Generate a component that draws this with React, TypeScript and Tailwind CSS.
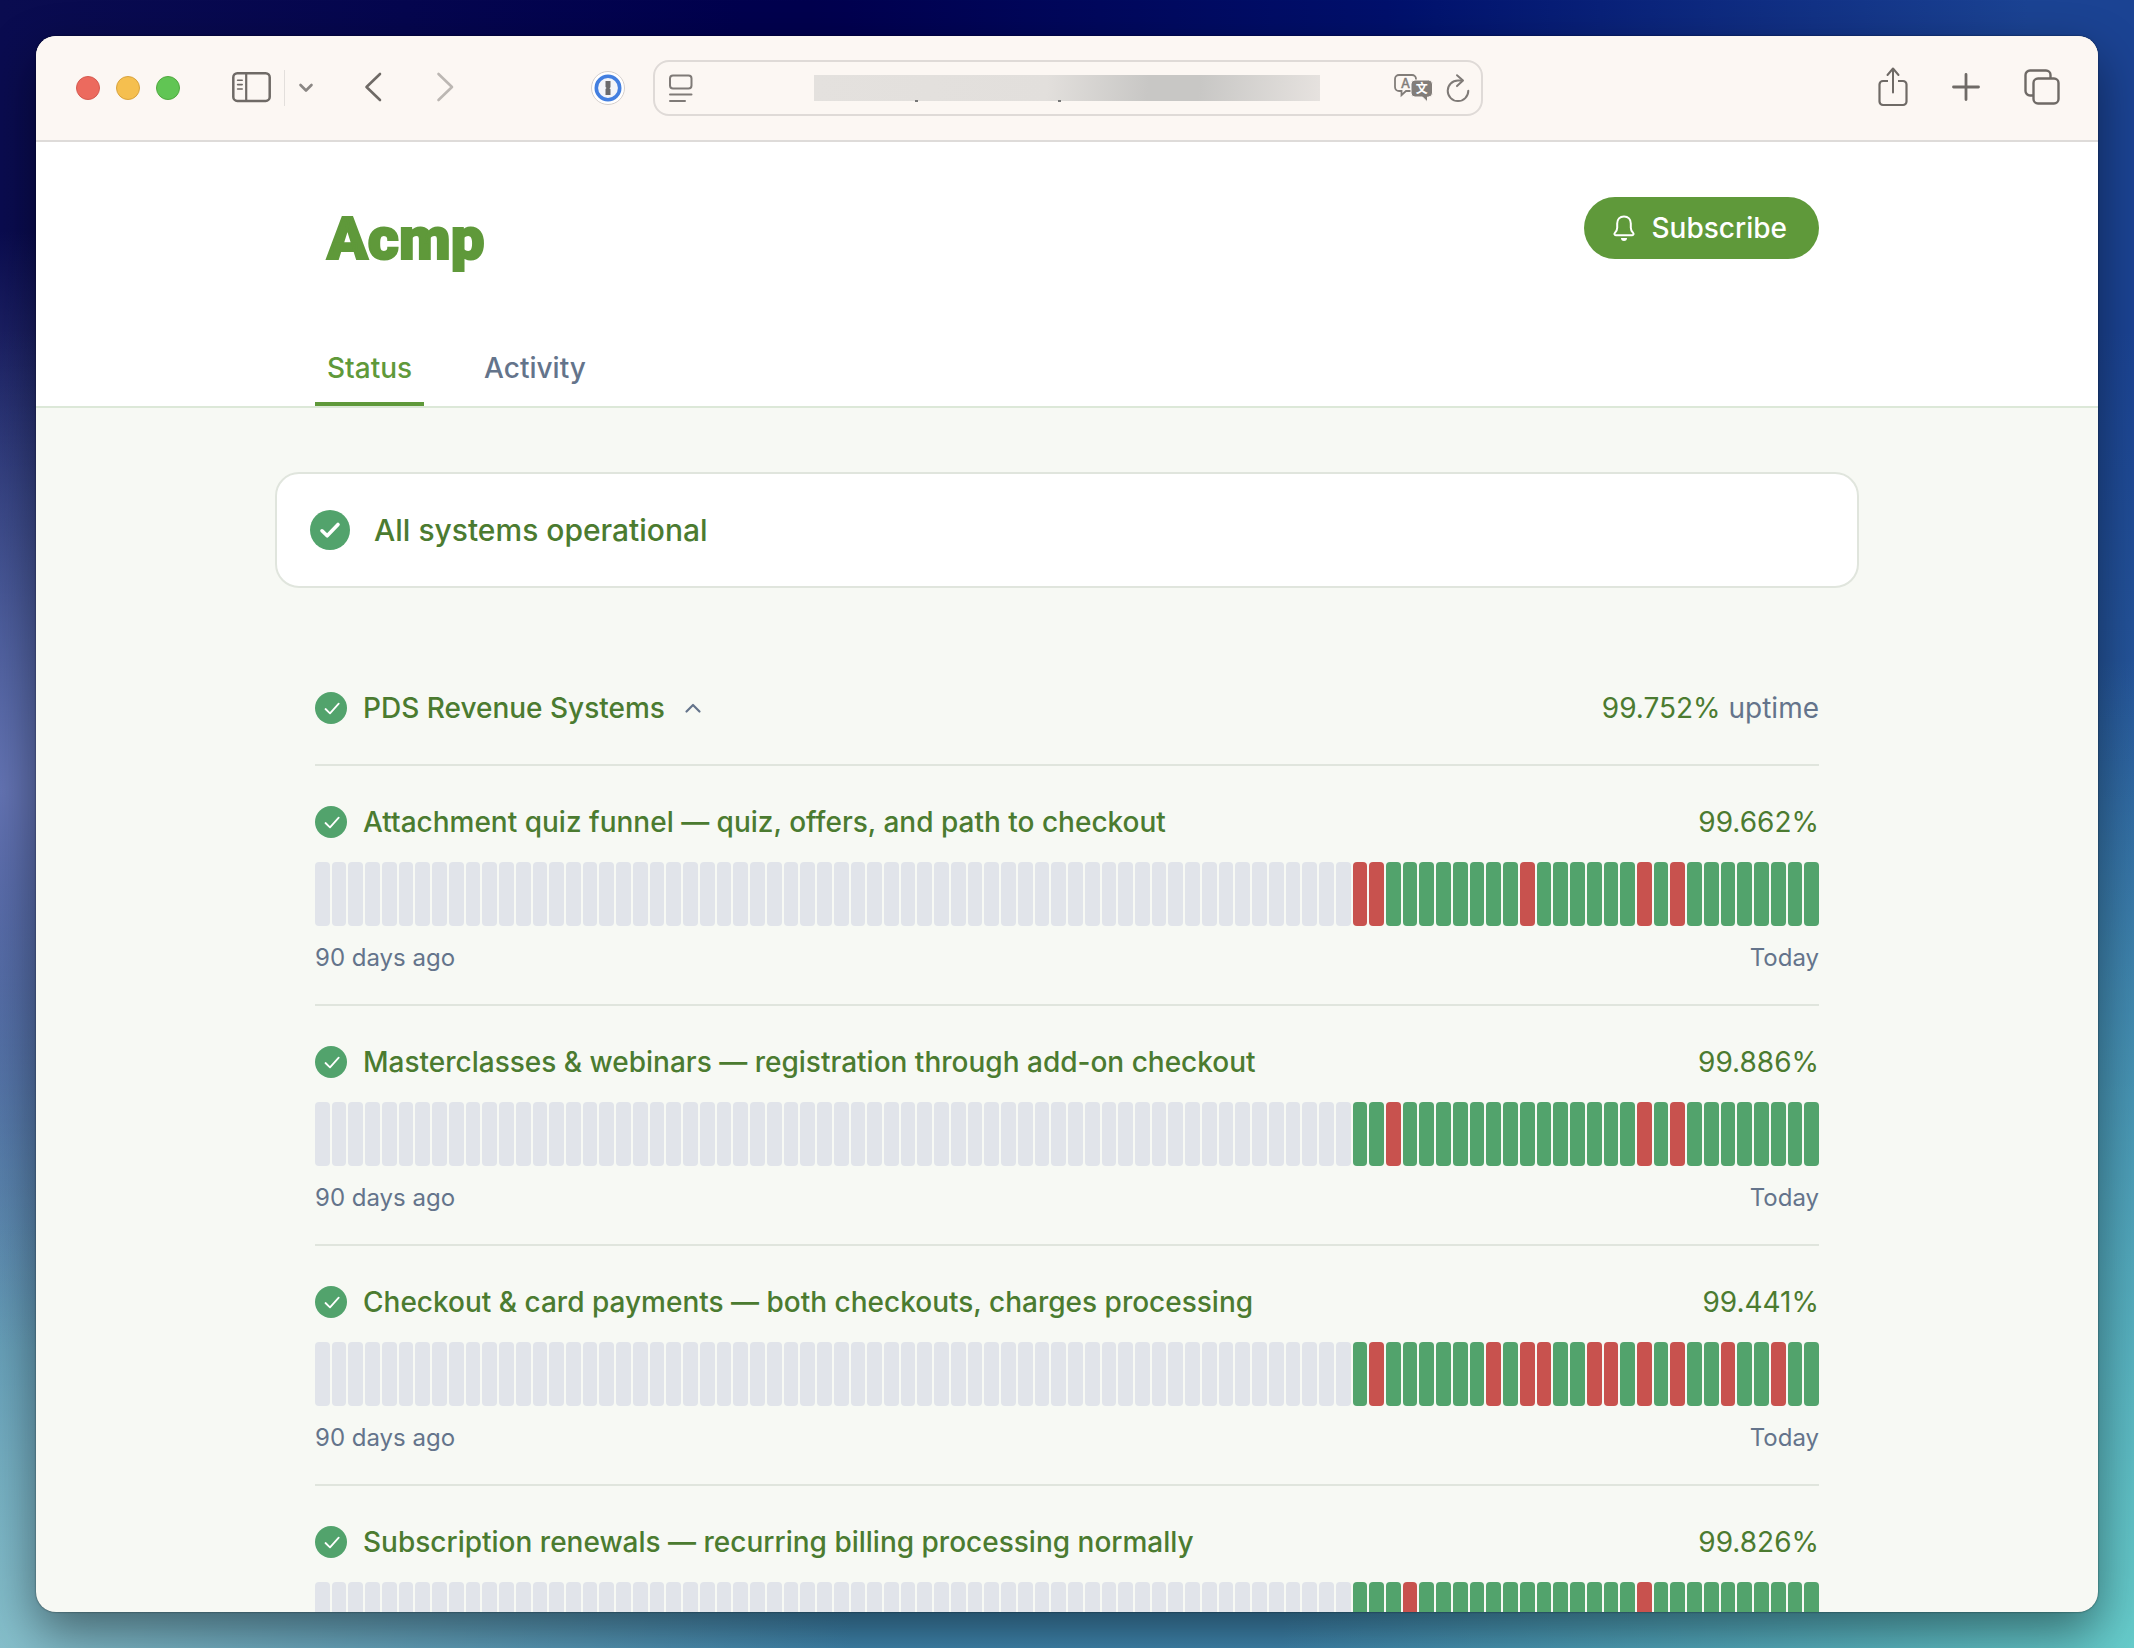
import type { ReactNode } from "react";

interface Service {
  name: string;
  uptime: string;
  outages: number[];
}

const TOTAL_DAYS = 90;
const TRACKED_DAYS = 28;

// outages are counted from the first tracked day
const services: Service[] = [
  {
    name: "Attachment quiz funnel — quiz, offers, and path to checkout",
    uptime: "99.662%",
    outages: [0, 1, 10, 17, 19],
  },
  {
    name: "Masterclasses & webinars — registration through add-on checkout",
    uptime: "99.886%",
    outages: [2, 17, 19],
  },
  {
    name: "Checkout & card payments — both checkouts, charges processing",
    uptime: "99.441%",
    outages: [1, 8, 10, 11, 14, 15, 17, 19, 22, 25],
  },
  {
    name: "Subscription renewals — recurring billing processing normally",
    uptime: "99.826%",
    outages: [3, 17],
  },
];

function ToolButton({ label, children }: { label: string; children: ReactNode }) {
  return (
    <button
      type="button"
      aria-label={label}
      className="flex shrink-0 items-center justify-center text-[#6f6a66]"
    >
      {children}
    </button>
  );
}

function StatusIcon() {
  return (
    <svg width="32" height="32" viewBox="0 0 32 32" fill="none" className="shrink-0">
      <circle cx="16" cy="16" r="16" fill="#52a36c" />
      <path
        d="M10.5 17l4.5 4.3 8.7-9.6"
        stroke="#fff"
        strokeWidth="1.8"
        strokeLinecap="round"
        strokeLinejoin="round"
      />
    </svg>
  );
}

function Toolbar() {
  return (
    <div className="flex h-[106px] shrink-0 items-start border-b-2 border-[#dedbd9] bg-[#fcf7f3] pt-6">
      {/* Left controls */}
      <div className="flex h-14 flex-1 items-center pl-10">
        <div className="flex gap-4">
          <span className="size-6 rounded-full border border-[#d65a50] bg-[#ec6a5e]" />
          <span className="size-6 rounded-full border border-[#d9a33d] bg-[#f5bf4f]" />
          <span className="size-6 rounded-full border border-[#50a93f] bg-[#61c554]" />
        </div>
        <div className="ml-[52px] flex items-center">
          <ToolButton label="Show sidebar">
            <svg width="40" height="32" viewBox="0 0 40 32" fill="none" stroke="currentColor">
              <rect x="1.3" y="1.3" width="36.4" height="27.6" rx="4" strokeWidth="2.5" />
              <path d="M14.2 1.5v27.2" strokeWidth="2.2" />
              <path d="M5.6 8.2h4.6M5.6 12.6h4.6M5.6 17h4.6" strokeWidth="1.6" strokeLinecap="round" />
            </svg>
          </ToolButton>
          <span className="ml-3 h-9 w-px bg-[#e3dfdc]" />
          <span className="ml-3">
            <ToolButton label="Tab groups">
              <svg width="18" height="16" viewBox="0 0 18 16" fill="none" stroke="#8a8683">
                <path d="M3.5 5L9 10.5 14.5 5" strokeWidth="2.6" strokeLinecap="round" strokeLinejoin="round" />
              </svg>
            </ToolButton>
          </span>
        </div>
        <div className="ml-12 flex items-center gap-12">
          <ToolButton label="Back">
            <svg width="24" height="32" viewBox="0 0 24 32" fill="none" stroke="currentColor">
              <path d="M17 2L3.5 15 17 28" strokeWidth="2.6" strokeLinecap="round" strokeLinejoin="round" />
            </svg>
          </ToolButton>
          <ToolButton label="Forward">
            <svg width="24" height="32" viewBox="0 0 24 32" fill="none" stroke="#bcb7b3">
              <path d="M3.5 2L17 15 3.5 28" strokeWidth="2.6" strokeLinecap="round" strokeLinejoin="round" />
            </svg>
          </ToolButton>
        </div>
        <div className="mr-7 ml-auto">
          <ToolButton label="Password manager">
            <svg width="34" height="34" viewBox="0 0 34 34">
              <circle cx="17" cy="17" r="16.5" fill="#fff" stroke="#d5cfcc" />
              <circle cx="17" cy="17" r="11.7" fill="#f3f4f8" stroke="#437fe0" strokeWidth="3.6" />
              <path d="M14.5 10h5v6.2l-1 1 1 1V24h-5v-6l1-1-1-1z" fill="#6a6a6c" />
            </svg>
          </ToolButton>
        </div>
      </div>

      {/* Address bar */}
      <div className="flex h-14 w-[830px] items-center rounded-2xl border-2 border-[#dfdad7] pr-[11px] pl-[14px]">
        <ToolButton label="Page settings">
          <svg width="24" height="28" viewBox="0 0 24 28" fill="none" stroke="#7f7a77">
            <rect x="1" y="1.5" width="21.5" height="13" rx="3" strokeWidth="2" />
            <path d="M1 20.5h21.5M1 27h15" strokeWidth="2" strokeLinecap="round" />
          </svg>
        </ToolButton>
        <div className="relative mr-[74px] ml-auto h-[26px]">
          <input
            type="text"
            readOnly
            aria-label="Address"
            className="block h-[26px] w-[506px] bg-[linear-gradient(95deg,#e4e1de_0%,#e2dfdc_46%,#c8c7c5_66%,#c8c7c5_76%,#e6e2df_100%)] outline-none"
          />
          <span className="absolute top-[25px] left-[101px] h-[2px] w-[3px] bg-[#777]" />
          <span className="absolute top-[25px] left-[244px] h-[2px] w-[3px] bg-[#777]" />
        </div>
        <div className="flex items-center gap-3">
          <ToolButton label="Translate">
            <svg width="40" height="30" viewBox="0 0 40 30">
              <path
                d="M5 2h13a4 4 0 014 4v8a4 4 0 01-4 4h-6l-4.5 4.2V18H5a4 4 0 01-4-4V6a4 4 0 014-4z"
                fill="none"
                stroke="#827d79"
                strokeWidth="1.8"
              />
              <text x="11.5" y="14.5" textAnchor="middle" fontSize="13" fontFamily="Inter, sans-serif" fill="#827d79" stroke="#827d79" strokeWidth="0.5">A</text>
              <path
                d="M21 7h13.5a4 4 0 014 4v9a4 4 0 01-4 4h-1v5l-5-5H21a4 4 0 01-4-4v-9a4 4 0 014-4z"
                fill="#827d79"
                stroke="#fcf7f3"
                strokeWidth="1"
              />
              <text x="27.8" y="20" textAnchor="middle" fontSize="12" fontWeight="700" fontFamily="'Noto Sans CJK SC', sans-serif" fill="#fff">文</text>
            </svg>
          </ToolButton>
          <ToolButton label="Reload">
            <svg width="24" height="30" viewBox="0 0 24 30" fill="none" stroke="#7f7a77">
              <path d="M16 7.5h-4a10.3 10.3 0 1010.3 10.3" strokeWidth="2" strokeLinecap="round" />
              <path d="M11 2.2l6 5.3-6 5.6" strokeWidth="2" strokeLinecap="round" strokeLinejoin="round" />
            </svg>
          </ToolButton>
        </div>
      </div>

      {/* Right controls */}
      <div className="flex h-[54px] flex-1 items-center justify-end gap-11 pr-[38px]">
        <ToolButton label="Share">
          <svg width="30" height="40" viewBox="0 0 30 40" fill="none" stroke="currentColor">
            <path d="M10 14H5a3.5 3.5 0 00-3.5 3.5v17A3.5 3.5 0 005 38h20a3.5 3.5 0 003.5-3.5v-17A3.5 3.5 0 0025 14h-5" strokeWidth="2.2" />
            <path d="M15 25.5V2M9.5 8L15 1.5 20.5 8" strokeWidth="2" strokeLinecap="round" strokeLinejoin="round" />
          </svg>
        </ToolButton>
        <ToolButton label="New tab">
          <svg width="28" height="28" viewBox="0 0 28 28" fill="none" stroke="currentColor">
            <path d="M14 1.5v25M1.5 14h25" strokeWidth="2.8" strokeLinecap="round" />
          </svg>
        </ToolButton>
        <ToolButton label="Tab overview">
          <svg width="36" height="36" viewBox="0 0 36 36" fill="none" stroke="currentColor">
            <rect x="9.5" y="9.5" width="25" height="25" rx="4.5" strokeWidth="2.4" />
            <path d="M9 26.5H6A4.500 4.500 0 011.5 22V6A4.500 4.500 0 016 1.5h16A4.500 4.500 0 0126.5 6v3" strokeWidth="2.4" />
          </svg>
        </ToolButton>
      </div>
    </div>
  );
}

function Header() {
  return (
    <header className="shrink-0 border-b-2 border-[#dce8d8] bg-white pt-[55px]">
      <div className="mx-auto w-full max-w-[1504px]">
        <div className="flex items-start justify-between">
          <a
            href="#"
            className="ml-3 pt-5 font-[Roboto,sans-serif] text-[60px]/[44px] font-black text-[#5f993a] [-webkit-text-stroke:2px_#5f993a]"
          >
            Acmp
          </a>
          <button
            type="button"
            className="flex h-[62px] items-center gap-4 rounded-full bg-[#5f993a] pr-8 pl-7 text-[28px]/[40px] font-medium text-white"
          >
            <svg width="24" height="28" viewBox="0 0 24 28" fill="none">
              <path
                d="M12 2.5c-4.2 0-6.8 3-6.8 7v4.2c0 2.3-.8 3.6-2.3 5.2-.9 1-.4 2.4.9 2.4h16.4c1.3 0 1.8-1.4.9-2.4-1.5-1.600-2.3-2.9-2.3-5.2V9.5c0-4-2.6-7-6.8-7z"
                stroke="#fff"
                strokeWidth="2"
                strokeLinejoin="round"
              />
              <path d="M9 24h6a3 3 0 01-6 0z" fill="#fff" />
            </svg>
            Subscribe
          </button>
        </div>
        <nav className="mt-[87px] flex gap-12 text-[28px]/[40px] font-medium">
          <a href="#status" className="border-b-4 border-[#5f993a] px-3 pb-[14px] text-[#5f993a]">
            Status
          </a>
          <a href="#activity" className="px-3 pb-[14px] text-[#64748b]">
            Activity
          </a>
        </nav>
      </div>
    </header>
  );
}

function UptimeBars({ outages }: { outages: number[] }) {
  const firstTracked = TOTAL_DAYS - TRACKED_DAYS;

  return (
    <div className="mt-5 flex h-16 gap-[2px]">
      {Array.from({ length: TOTAL_DAYS }, (_, day) => {
        let color = "bg-[#e1e4ea]";
        if (day >= firstTracked) {
          color = outages.includes(day - firstTracked) ? "bg-[#c8524e]" : "bg-[#52a36c]";
        }
        return <div key={day} className={`flex-1 rounded-[4px] ${color}`} />;
      })}
    </div>
  );
}

function ServiceRow({ service }: { service: Service }) {
  return (
    <li className="border-t-2 border-[#e0e5dd] pt-9 pb-[30px]">
      <div className="flex items-center gap-4 text-[28px]/[40px]">
        <StatusIcon />
        <h3 className="font-medium">{service.name}</h3>
        <span className="ml-auto">{service.uptime}</span>
      </div>
      <UptimeBars outages={service.outages} />
      <div className="mt-4 flex justify-between text-[24px]/[32px] text-[#64748b]">
        <span>90 days ago</span>
        <span>Today</span>
      </div>
    </li>
  );
}

export default function App() {
  return (
    <div className="h-screen bg-[radial-gradient(ellipse_30%_34%_at_0%_48%,#6474b4_0%,transparent_100%),radial-gradient(ellipse_40%_50%_at_0%_100%,#86bfcb_0%,transparent_100%),radial-gradient(ellipse_40%_60%_at_100%_100%,#66cccb_0%,transparent_100%),linear-gradient(180deg,transparent_20%,#3f86ae_100%),linear-gradient(90deg,#0a0c50_0%,#00004e_38%,#00106c_65%,#1b4393_95%)] p-9 font-[Inter,sans-serif] text-[#4b7b30]">
      <div className="flex h-full flex-col overflow-hidden rounded-[20px] bg-[#f7f9f4] shadow-[0_0_2px_rgba(0,0,0,0.6),0_20px_50px_rgba(0,0,0,0.45)]">
        <Toolbar />
        <Header />
        <main className="min-h-0 flex-1 overflow-y-auto pt-16 [scrollbar-width:none]">
          <div className="mx-auto flex w-full max-w-[1584px] items-center gap-6 rounded-3xl border-2 border-[#e0e5dd] bg-white px-[33px] py-9">
            <svg width="40" height="40" viewBox="0 0 40 40" fill="none" className="shrink-0">
              <circle cx="20" cy="20" r="20" fill="#52a36c" />
              <path
                d="M12 20.8l5.2 5L28 14.5"
                stroke="#fff"
                strokeWidth="3.6"
                strokeLinecap="round"
                strokeLinejoin="round"
              />
            </svg>
            <h1 className="text-[30px]/[40px] font-medium">All systems operational</h1>
          </div>

          <section className="mx-auto mt-[100px] w-full max-w-[1504px]">
            <div className="flex items-center justify-between pb-9 text-[28px]/[40px]">
              <button type="button" aria-expanded="true" className="flex items-center gap-4 font-medium">
                <StatusIcon />
                PDS Revenue Systems
                <svg width="24" height="24" viewBox="0 0 24 24" fill="none">
                  <path
                    d="M5.5 15.5L12 9l6.5 6.5"
                    stroke="#64748b"
                    strokeWidth="2.2"
                    strokeLinecap="round"
                    strokeLinejoin="round"
                  />
                </svg>
              </button>
              <p>
                99.752% <span className="text-[#64748b]">uptime</span>
              </p>
            </div>
            <ul>
              {services.map((service) => (
                <ServiceRow key={service.name} service={service} />
              ))}
            </ul>
          </section>
        </main>
      </div>
    </div>
  );
}
